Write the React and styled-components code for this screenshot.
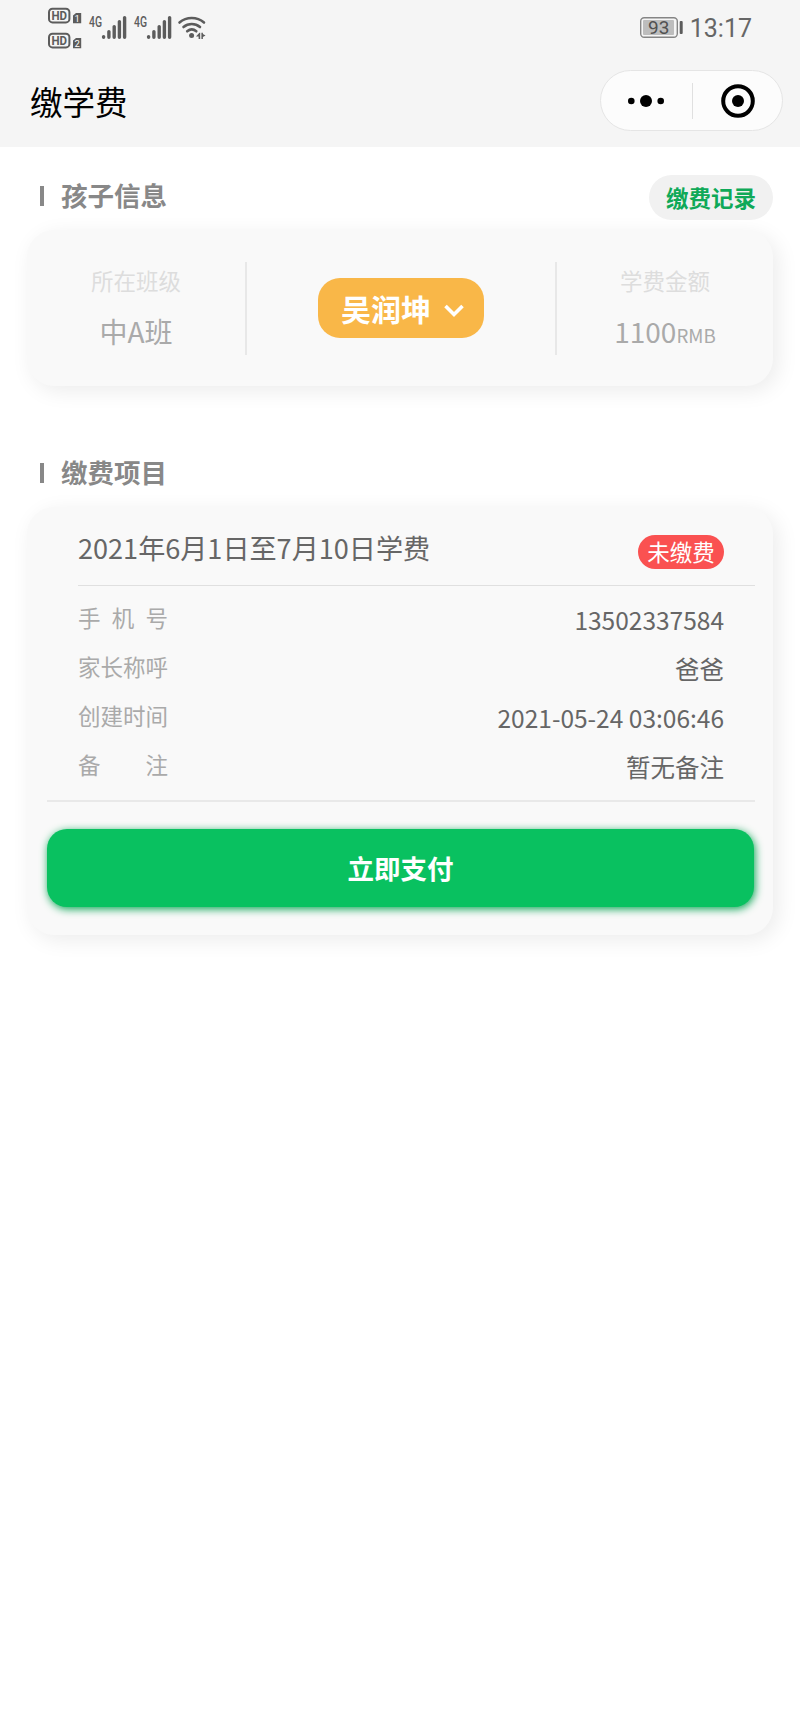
import React from 'react'
import styled, { createGlobalStyle } from 'styled-components'

const GlobalStyle = createGlobalStyle`
  * {
    box-sizing: border-box;
  }
  body {
    margin: 0;
    background: #fff;
    font-family: "Noto Sans CJK SC", "Noto Sans", sans-serif;
  }
`

const Page = styled.div`
  min-height: 1733px;
  background: #fff;
`

const Header = styled.header`
  height: 147px;
  background: #f5f5f5;
`

const StatusBar = styled.div`
  display: flex;
  justify-content: space-between;
  height: 56px;
  padding: 0 48px;
`

const Clock = styled.div`
  display: flex;
  align-items: center;
  gap: 6px;
  font-family: Roboto, sans-serif;
  font-size: 25px;
  line-height: 57px;
  color: #666;
`

const NavBar = styled.div`
  display: flex;
  justify-content: space-between;
  padding: 14px 17px 0 30px;
`

const PageTitle = styled.h1`
  margin: 0;
  font-size: 32.5px;
  font-weight: 400;
  line-height: 62px;
  color: #000;
`

const Capsule = styled.div`
  display: flex;
  align-items: center;
  width: 183px;
  height: 61px;
  border: 1px solid #e5e5e5;
  border-radius: 31px;
  background: #fcfcfc;
`

const CapsuleButton = styled.div`
  display: flex;
  justify-content: center;
  width: 50%;

  & + & {
    padding-left: 2px;
    border-left: 1px solid #e0e0e0;
  }
`

const Section = styled.section`
  padding: ${props => props.top}px 27px 0;
`

const SectionHead = styled.div`
  display: flex;
  justify-content: space-between;
  align-items: flex-start;
  height: 45px;
  padding-left: 13px;
`

const SectionTitle = styled.h2`
  display: flex;
  align-items: center;
  gap: 17px;
  margin: 0;
  font-size: 26.5px;
  font-weight: 700;
  line-height: 40px;
  color: #888;

  &::before {
    content: "";
    width: 4px;
    height: 20px;
    margin-top: 2px;
    background: #888;
  }
`

const RecordButton = styled.div`
  width: 124px;
  border-radius: 23px;
  background: #f1f1f1;
  font-size: 22.5px;
  font-weight: 700;
  line-height: 45px;
  text-align: center;
  color: #0fa958;
`

const Card = styled.div`
  height: ${props => props.height}px;
  margin-top: 10px;
  border-radius: 27px;
  background: #f9f9f9;
  box-shadow: 5px 5px 21px rgba(0, 0, 0, .08);
`

const ChildCard = styled(Card)`
  display: grid;
  grid-template-columns: 218px 1fr 216px;
  align-items: center;
`

const Cell = styled.div`
  display: flex;
  flex-direction: column;
  align-items: center;
  height: 93px;
`

const CellLabel = styled.div`
  font-size: 22.5px;
  line-height: 36px;
  color: #ddd;
`

const CellValue = styled.div`
  margin-top: 13px;
  font-size: 28px;
  line-height: 41px;
  color: #aaa;

  small {
    font-size: 18.7px;
  }
`

const Middle = styled.div`
  display: flex;
  align-items: center;
  justify-content: center;
  height: 93px;
  border: solid #e8e8e8;
  border-width: 0 2px;
`

const ChildPicker = styled.div`
  display: flex;
  align-items: center;
  gap: 13px;
  height: 60px;
  padding: 0 20px 0 23px;
  border-radius: 22px;
  background: #f9b748;
  font-size: 30px;
  font-weight: 700;
  line-height: 60px;
  color: #fff;

  svg {
    margin-top: 6px;
  }
`

const BillCard = styled(Card)`
  padding: 0 18px 0 20px;
`

const BillHead = styled.div`
  display: flex;
  justify-content: space-between;
  height: 79px;
  margin-left: 31px;
  padding: 20px 31px 0 0;
  border-bottom: 1px solid #e0e0e0;
`

const BillName = styled.div`
  font-size: 27.1px;
  line-height: 42px;
  color: #666;
`

const Badge = styled.div`
  width: 86px;
  height: 34px;
  margin-top: 8px;
  border-radius: 17px;
  background: #fa5151;
  font-size: 22.5px;
  line-height: 33px;
  text-align: center;
  color: #fff;
`

const BillRows = styled.div`
  height: 216px;
  padding: 7px 31px 0;
  border-bottom: 2px solid #e9e9e9;
`

const Row = styled.div`
  display: flex;
  justify-content: space-between;
  height: 48.9px;
`

const RowLabel = styled.div`
  width: 90px;
  font-size: 22.5px;
  line-height: 48px;
  text-align-last: justify;
  color: #aaa;
`

const RowValue = styled.div`
  padding-top: 3px;
  font-size: 24.5px;
  line-height: 48px;
  color: #666;
`

const PayButton = styled.div`
  height: 78px;
  margin: 27px 1px 0 0;
  border-radius: 20px;
  background: #09c160;
  box-shadow: 1px 2px 9px #09a553;
  font-size: 26.5px;
  font-weight: 700;
  line-height: 78px;
  text-align: center;
  color: #fff;
`

const rows = [
  { label: '手机号', value: '13502337584' },
  { label: '家长称呼', value: '爸爸' },
  { label: '创建时间', value: '2021-05-24 03:06:46' },
  { label: '备注', value: '暂无备注' },
]

function HdMark({ y, sim }) {
  return (
    <g transform={`translate(0 ${y})`}>
      <rect x="1" y=".8" width="20.4" height="13.600" rx="3.500" fill="none" stroke="#5c5c5c" strokeWidth="2" />
      <text x="3.4" y="12.300" fontSize="13" fontWeight="700" textLength="15.600" lengthAdjust="spacingAndGlyphs">HD</text>
      <path d="M28 5h5.200v10.200h-8.200V7.500z" />
      <text x="26.400" y="13.600" fontSize="9.500" fontWeight="400" fill="#fff">{sim}</text>
    </g>
  )
}

function Signal({ x }) {
  return (
    <g transform={`translate(${x} 0)`}>
      <text x="0" y="26.5" fontSize="14.500" fontWeight="500" textLength="13" lengthAdjust="spacingAndGlyphs">4G</text>
      <g stroke="#5c5c5c" strokeWidth="3.4" strokeLinecap="round">
        <path d="M14.6 36.6v.6M19.9 31.6v5.6M25.2 26.6v10.6M30.4 21.6v15.6M35.6 17.6v19.6" />
      </g>
    </g>
  )
}

function NetworkIcons() {
  return (
    <svg width="160" height="56" fill="#5c5c5c" fontFamily="Roboto">
      <HdMark y={8} sim="1" />
      <HdMark y={33} sim="2" />
      <Signal x={41} />
      <Signal x={86} />
      <g fill="none" stroke="#5c5c5c" strokeWidth="2.6" strokeLinecap="round">
        <path d="M131.5 22.5c7-6 17.500-6 24.500 0M135.500 27c4.800-4 11.700-4 16.500 0M139.200 31.300c2.700-2.200 6.400-2.200 9.100 0" />
      </g>
      <circle cx="143.600" cy="35.500" r="2.500" />
      <path d="M148 36.400l3.400-3.600h.8v6.200h-1.600v-2.600zM153.400 32.800h1.500v1.200l2.600 1.600-2.600 1.300v2.100h-1.500z" />
    </svg>
  )
}

function Battery() {
  return (
    <svg width="44" height="22" viewBox="0 0 44 22">
      <rect x=".7" y=".7" width="36.6" height="19.6" rx="3.500" fill="none" stroke="#858585" strokeWidth="1.400" />
      <rect x="3" y="3" width="31" height="15" rx="1" fill="#bdbdbd" />
      <rect x="39.700" y="4" width="3" height="13" rx="1" fill="#5c5c5c" />
      <text x="8" y="17" fontFamily="Roboto" fontSize="19" fill="#505050">93</text>
    </svg>
  )
}

function App() {
  return (
    <Page>
      <GlobalStyle />
      <Header>
        <StatusBar>
          <NetworkIcons />
          <Clock>
            <Battery />
            <span>13:17</span>
          </Clock>
        </StatusBar>
        <NavBar>
          <PageTitle>缴学费</PageTitle>
          <Capsule>
            <CapsuleButton>
              <svg width="38" height="36">
                <circle cx="4.300" cy="18" r="3.300" />
                <circle cx="19" cy="18" r="6" />
                <circle cx="33.700" cy="18" r="3.300" />
              </svg>
            </CapsuleButton>
            <CapsuleButton>
              <svg width="36" height="36">
                <circle cx="18" cy="18" r="14.800" fill="none" stroke="#000" strokeWidth="4" />
                <circle cx="18" cy="18" r="6" />
              </svg>
            </CapsuleButton>
          </Capsule>
        </NavBar>
      </Header>

      <Section top={28}>
        <SectionHead>
          <SectionTitle>孩子信息</SectionTitle>
          <RecordButton>缴费记录</RecordButton>
        </SectionHead>
        <ChildCard height={156}>
          <Cell>
            <CellLabel>所在班级</CellLabel>
            <CellValue>中A班</CellValue>
          </Cell>
          <Middle>
            <ChildPicker>
              吴润坤
              <svg width="20" height="16" fill="none" stroke="#fff" strokeWidth="3.600">
                <path d="M1.500 3l8.500 8.500L18.500 3" />
              </svg>
            </ChildPicker>
          </Middle>
          <Cell>
            <CellLabel>学费金额</CellLabel>
            <CellValue>1100<small>RMB</small></CellValue>
          </Cell>
        </ChildCard>
      </Section>

      <Section top={66}>
        <SectionHead>
          <SectionTitle>缴费项目</SectionTitle>
        </SectionHead>
        <BillCard height={428}>
          <BillHead>
            <BillName>2021年6月1日至7月10日学费</BillName>
            <Badge>未缴费</Badge>
          </BillHead>
          <BillRows>
            {rows.map(row => (
              <Row key={row.label}>
                <RowLabel>{row.label}</RowLabel>
                <RowValue>{row.value}</RowValue>
              </Row>
            ))}
          </BillRows>
          <PayButton>立即支付</PayButton>
        </BillCard>
      </Section>
    </Page>
  )
}

export default App
